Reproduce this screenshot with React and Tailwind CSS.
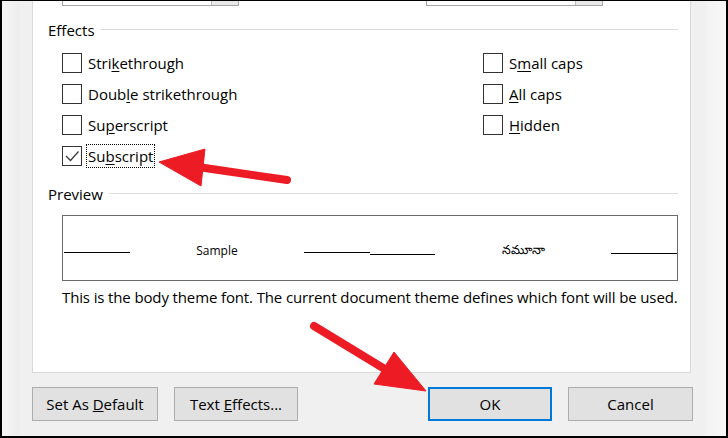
import React from "react";

const FONT = { fontFamily: '"Open Sans", "Noto Sans", sans-serif' };

const Checkbox = ({ checked }) => (
  <div className="w-[20px] h-[20px] border border-[#333333] bg-white shrink-0 flex items-center justify-center">
    {checked && (
      <svg width="18" height="18" viewBox="0 0 18 18">
        <polyline
          points="3,9 7.5,13.5 15.5,4.5"
          fill="none"
          stroke="#3a3a3a"
          strokeWidth="1.3"
        />
      </svg>
    )}
  </div>
);

// label text with one underlined access key
const Label = ({ pre, key_, post, focused }) => (
  <span
    className={`ml-[4px] h-[24px] px-[1px] flex items-center text-[15px] leading-[20px] text-black border border-dotted ${
      focused ? "border-black" : "border-transparent"
    }`}
  >
    {pre}
    <u className="underline-offset-2">{key_}</u>
    {post}
  </span>
);

const Row = ({ pre, k, post, checked, focused }) => (
  <div className="h-[20px] flex items-center">
    <Checkbox checked={checked} />
    <Label pre={pre} key_={k} post={post} focused={focused} />
  </div>
);

const Header = ({ children }) => (
  <div className="h-[20px] flex items-center gap-[6px]">
    <span className="text-[15px] leading-[20px] text-black">{children}</span>
    <div className="flex-1 h-px bg-[#dcdcdc] -mt-[2px]" />
  </div>
);

const Button = ({ children, primary, className = "" }) => (
  <button
    className={`h-[34px] flex items-center justify-center text-[15px] text-black bg-[#e1e1e1] ${
      primary ? "border-2 border-[#0078d7]" : "border border-[#adadad]"
    } ${className}`}
  >
    {children}
  </button>
);

const Arrows = () => (
  <svg
    className="absolute inset-0 pointer-events-none"
    width="728"
    height="438"
    viewBox="0 0 728 438"
  >
    <g fill="#ed1c24" stroke="#ed1c24">
      <line x1="285" y1="179" x2="196" y2="166" strokeWidth="8" strokeLinecap="round" />
      <polygon points="157,161 203,148 199,185" strokeWidth="1" strokeLinejoin="round" />
      <line x1="312" y1="325" x2="386" y2="370" strokeWidth="8" strokeLinecap="round" />
      <polygon points="392,351 372,383 424,390" strokeWidth="1" strokeLinejoin="round" />
    </g>
  </svg>
);

export default function App() {
  return (
    <div
      className="relative w-[728px] h-[438px] overflow-hidden border-x-2 border-b-2 border-t border-black flex bg-[#f0f0f0]"
      style={FONT}
    >
      {/* left backdrop */}
      <div className="w-[18px] bg-gradient-to-r from-[#f6f6f6] to-[#ededed]" />

      {/* dialog body */}
      <div className="w-[686px] bg-[#f0f0f0] flex flex-col">
        <div className="ml-[12px] w-[659px] h-[372px] bg-white border-x border-b border-[#d9d9d9] pl-[15px] pr-[12px] flex flex-col">
          {/* cut-off dropdowns from the section above */}
          <div className="h-[5px] flex ml-[14px] gap-[187px]">
            {[0, 1].map((i) => (
              <div
                key={i}
                className="w-[177px] h-[5px] border-x border-b border-[#a6a6a6] flex justify-end"
              >
                <div className="w-[27px] h-[4px] bg-[#e8e8e8] border-l border-[#b9b9b9]" />
              </div>
            ))}
          </div>

          <div className="mt-[14px]">
            <Header>Effects</Header>
          </div>

          {/* effects checkboxes */}
          <div className="mt-[13px] ml-[14px] flex">
            <div className="w-[421px] flex flex-col gap-[11px]">
              <Row pre="Stri" k="k" post="ethrough" />
              <Row pre="Doub" k="l" post="e strikethrough" />
              <Row pre="Su" k="p" post="erscript" />
              <Row pre="Su" k="b" post="script" checked focused />
            </div>
            <div className="flex flex-col gap-[11px]">
              <Row pre="S" k="m" post="all caps" />
              <Row pre="" k="A" post="ll caps" />
              <Row pre="" k="H" post="idden" />
            </div>
          </div>

          <div className="mt-[18px]">
            <Header>Preview</Header>
          </div>

          {/* preview box */}
          <div className="mt-[11px] ml-[14px] h-[66px] border border-[#6b6b6b] flex items-start">
            <div className="w-[67px] pl-[1px]">
              <div className="mt-[36px] h-px bg-black" />
            </div>
            <div className="w-[174px] mt-[27px] text-center text-[12px] leading-[16px] text-black">
              Sample
            </div>
            <div className="w-[66px] mt-[36px] h-px bg-black" />
            <div className="w-[65px] mt-[38px] h-px bg-black" />
            <div className="w-[176px] mt-[26px] text-center text-[12.5px] leading-[16px] text-black">
              నమూనా
            </div>
            <div className="w-[66px] mt-[37px] h-px bg-black" />
          </div>

          <p className="mt-[7px] ml-[14px] text-[15px] leading-[18px] tracking-[-0.13px] text-black whitespace-nowrap">
            This is the body theme font. The current document theme defines which font will be used.
          </p>
        </div>

        {/* buttons */}
        <div className="mt-[14px] ml-[12px] flex">
          <Button className="w-[126px]">
            <span>
              Set As <u>D</u>efault
            </span>
          </Button>
          <Button className="w-[124px] ml-[16px]">
            <span>
              Text <u>E</u>ffects...
            </span>
          </Button>
          <Button primary className="w-[124px] ml-[130px]">
            OK
          </Button>
          <Button className="w-[125px] ml-[16px]">Cancel</Button>
        </div>
      </div>

      {/* right backdrop */}
      <div className="flex-1 bg-gradient-to-r from-[#f3f3f3] to-[#f8f8f8]" />

      <Arrows />
    </div>
  );
}
